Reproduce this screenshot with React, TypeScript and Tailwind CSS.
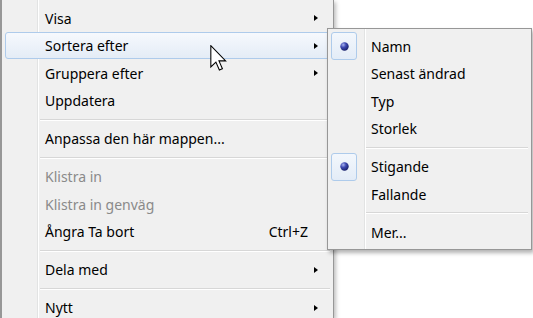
import React from 'react';

type MainItem =
  | { kind: 'item'; label: string; submenu?: boolean; disabled?: boolean; shortcut?: string; active?: boolean }
  | { kind: 'sep' };

type SubItem = { kind: 'item'; label: string; checked?: boolean } | { kind: 'sep' };

const mainItems: MainItem[] = [
  { kind: 'item', label: 'Visa', submenu: true },
  { kind: 'item', label: 'Sortera efter', submenu: true, active: true },
  { kind: 'item', label: 'Gruppera efter', submenu: true },
  { kind: 'item', label: 'Uppdatera' },
  { kind: 'sep' },
  { kind: 'item', label: 'Anpassa den här mappen...' },
  { kind: 'sep' },
  { kind: 'item', label: 'Klistra in', disabled: true },
  { kind: 'item', label: 'Klistra in genväg', disabled: true },
  { kind: 'item', label: 'Ångra Ta bort', shortcut: 'Ctrl+Z' },
  { kind: 'sep' },
  { kind: 'item', label: 'Dela med', submenu: true },
  { kind: 'sep' },
  { kind: 'item', label: 'Nytt', submenu: true },
];

const subItems: SubItem[] = [
  { kind: 'item', label: 'Namn', checked: true },
  { kind: 'item', label: 'Senast ändrad' },
  { kind: 'item', label: 'Typ' },
  { kind: 'item', label: 'Storlek' },
  { kind: 'sep' },
  { kind: 'item', label: 'Stigande', checked: true },
  { kind: 'item', label: 'Fallande' },
  { kind: 'sep' },
  { kind: 'item', label: 'Mer...' },
];

const font = { fontFamily: '"Noto Sans", "Open Sans", sans-serif' };

const Arrow = () => (
  <span className="w-0 h-0 border-y-[3.5px] border-y-transparent border-l-[4px] border-l-black" />
);

const Separator = ({ inset }: { inset: string }) => (
  <div className={`h-[10.5px] flex flex-col justify-center ${inset}`}>
    <div className="h-px bg-[#d7d7d7]" />
    <div className="h-px bg-white" />
  </div>
);

const Bullet = () => (
  <svg width="9" height="9" viewBox="0 0 9 9">
    <defs>
      <radialGradient id="bul" cx="35%" cy="30%" r="70%">
        <stop offset="0%" stopColor="#a9b4ee" />
        <stop offset="45%" stopColor="#3f4bb3" />
        <stop offset="100%" stopColor="#1b236e" />
      </radialGradient>
    </defs>
    <circle cx="4.5" cy="4.5" r="4.2" fill="url(#bul)" />
  </svg>
);

const Cursor = () => (
  <svg width="17" height="26" viewBox="0 0 12.5 19.5" className="absolute left-[210px] top-[45px]">
    <path
      d="M0.5 0.5 L0.5 16.5 L4.3 12.8 L6.9 18.8 L9.2 17.8 L6.6 11.9 L11.6 11.9 Z"
      fill="white"
      stroke="black"
      strokeWidth="0.8"
      strokeLinejoin="miter"
    />
  </svg>
);

const MainMenu = () => (
  <div
    className="w-[334px] h-full border-l-2 border-r border-[#979797] pt-[4.25px] shadow-[2px_2px_4px_rgba(0,0,0,0.25)] bg-[linear-gradient(to_right,#f0f0f0_35px,#e2e3e3_35px,#e2e3e3_36px,#ffffff_36px,#ffffff_37px,#f0f0f0_37px)]"
    style={font}
  >
    {mainItems.map((it, i) =>
      it.kind === 'sep' ? (
        <Separator key={i} inset="ml-[38px] mr-[3px]" />
      ) : (
        <div
          key={i}
          className={`mx-[3px] h-[27.5px] flex items-center pl-[39px] pr-[11px] text-[14px] rounded-[3px] border ${
            it.active
              ? 'border-[#aecbeb] bg-[linear-gradient(to_bottom,#f6f9fd,#e4ecf6)]'
              : 'border-transparent'
          } ${it.disabled ? 'text-[#8a8a8a]' : 'text-black'}`}
        >
          <span className="flex-1">{it.label}</span>
          {it.shortcut && <span className="mr-[10px]">{it.shortcut}</span>}
          {it.submenu && <Arrow />}
        </div>
      )
    )}
  </div>
);

const SubMenu = () => (
  <div
    className="absolute left-[327px] top-[28px] w-[205px] h-[222px] border border-[#979797] py-[3.25px] shadow-[2px_3px_4px_rgba(0,0,0,0.3)] bg-[linear-gradient(to_right,#f0f0f0_36px,#e2e3e3_36px,#e2e3e3_37px,#ffffff_37px,#ffffff_38px,#f0f0f0_38px)]"
    style={font}
  >
    {subItems.map((it, i) =>
      it.kind === 'sep' ? (
        <Separator key={i} inset="ml-[38px] mr-[3px]" />
      ) : (
        <div key={i} className="mx-[3px] h-[27.5px] flex items-center text-[14px] text-black">
          <div className="w-[26px] h-full flex items-center justify-center">
            {it.checked && (
              <div className="w-[26px] h-[28px] rounded-[3px] border border-[#aecbeb] bg-[linear-gradient(to_bottom,#f3f7fc,#e3ecf7)] flex items-center justify-center">
                <Bullet />
              </div>
            )}
          </div>
          <span className="pl-[14px]">{it.label}</span>
        </div>
      )
    )}
  </div>
);

export default function App() {
  return (
    <div className="relative w-[533px] h-[318px] overflow-hidden bg-white">
      <MainMenu />
      <SubMenu />
      <Cursor />
    </div>
  );
}
